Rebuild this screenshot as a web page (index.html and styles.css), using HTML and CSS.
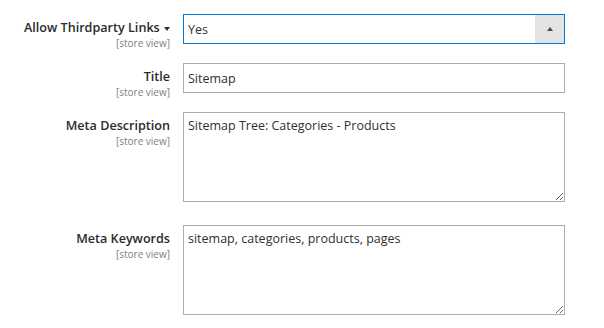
FILE: index.html
```html
<!DOCTYPE html>
<html lang="en">
<head>
  <meta charset="UTF-8">
  <meta name="viewport" content="width=device-width, initial-scale=1">
  <title>Sitemap settings</title>
  <link rel="stylesheet" href="styles.css">
</head>
<body>
  <form class="fieldset">
    <div class="field">
      <div class="label">
        <label for="thirdparty">Allow Thirdparty Links <span class="caret"></span></label>
        <span class="scope">[store view]</span>
      </div>
      <div class="control">
        <div class="select-wrap">
          <select id="thirdparty">
            <option>Yes</option>
            <option>No</option>
          </select>
          <span class="select-arrow"><span class="tri"></span></span>
        </div>
      </div>
    </div>

    <div class="field">
      <div class="label">
        <label for="title">Title</label>
        <span class="scope">[store view]</span>
      </div>
      <div class="control">
        <input type="text" id="title" value="Sitemap">
      </div>
    </div>

    <div class="field">
      <div class="label">
        <label for="metaDesc">Meta Description</label>
        <span class="scope">[store view]</span>
      </div>
      <div class="control">
        <textarea id="metaDesc">Sitemap Tree: Categories - Products</textarea>
      </div>
    </div>

    <div class="field">
      <div class="label">
        <label for="metaKeys">Meta Keywords</label>
        <span class="scope">[store view]</span>
      </div>
      <div class="control">
        <textarea id="metaKeys">sitemap, categories, products, pages</textarea>
      </div>
    </div>
  </form>
</body>
</html>
```

FILE: styles.css
```css
body {
  margin: 0;
  padding: 14px 0 0 0;
  background: #fff;
  font-family: 'Open Sans', 'Liberation Sans', sans-serif;
  color: #303030;
}
.fieldset {
  display: flex;
  flex-direction: column;
  gap: 19px;
}
.field {
  display: flex;
  align-items: flex-start;
  gap: 13px;
}
.label {
  width: 170px;
  display: flex;
  flex-direction: column;
  align-items: flex-end;
  text-align: right;
  padding-top: 5px;
  margin-bottom: -10px;
}
.label label {
  font-size: 12.6px;
  font-weight: 600;
  line-height: 18px;
  color: #2b2b2b;
}
.caret {
  display: inline-block;
  width: 0;
  height: 0;
  border-left: 3px solid transparent;
  border-right: 3px solid transparent;
  border-top: 4px solid #303030;
  vertical-align: middle;
  margin-left: 1px;
}
.scope {
  font-size: 10px;
  color: #808080;
  line-height: 12px;
}
.control {
  width: 382px;
}
.select-wrap {
  display: flex;
  height: 30px;
  box-sizing: border-box;
  border: 1px solid #007bdb;
}
.select-wrap select {
  flex: 1;
  appearance: none;
  -webkit-appearance: none;
  border: none;
  background: #fff;
  font-family: inherit;
  font-size: 12.5px;
  color: #303030;
  padding: 0 4px;
  outline: none;
}
.select-arrow {
  width: 29px;
  background: #e3e3e3;
  display: flex;
  align-items: center;
  justify-content: center;
}
.tri {
  width: 0;
  height: 0;
  border-left: 3px solid transparent;
  border-right: 3px solid transparent;
  border-bottom: 4px solid #514943;
}
input,
textarea {
  display: block;
  width: 100%;
  box-sizing: border-box;
  border: 1px solid #adadad;
  font-family: inherit;
  font-size: 12.5px;
  color: #303030;
  padding: 4px;
  margin: 0;
}
input {
  height: 30px;
}
textarea {
  height: 90px;
}
.field:last-child {
  margin-top: 4px;
}
```
